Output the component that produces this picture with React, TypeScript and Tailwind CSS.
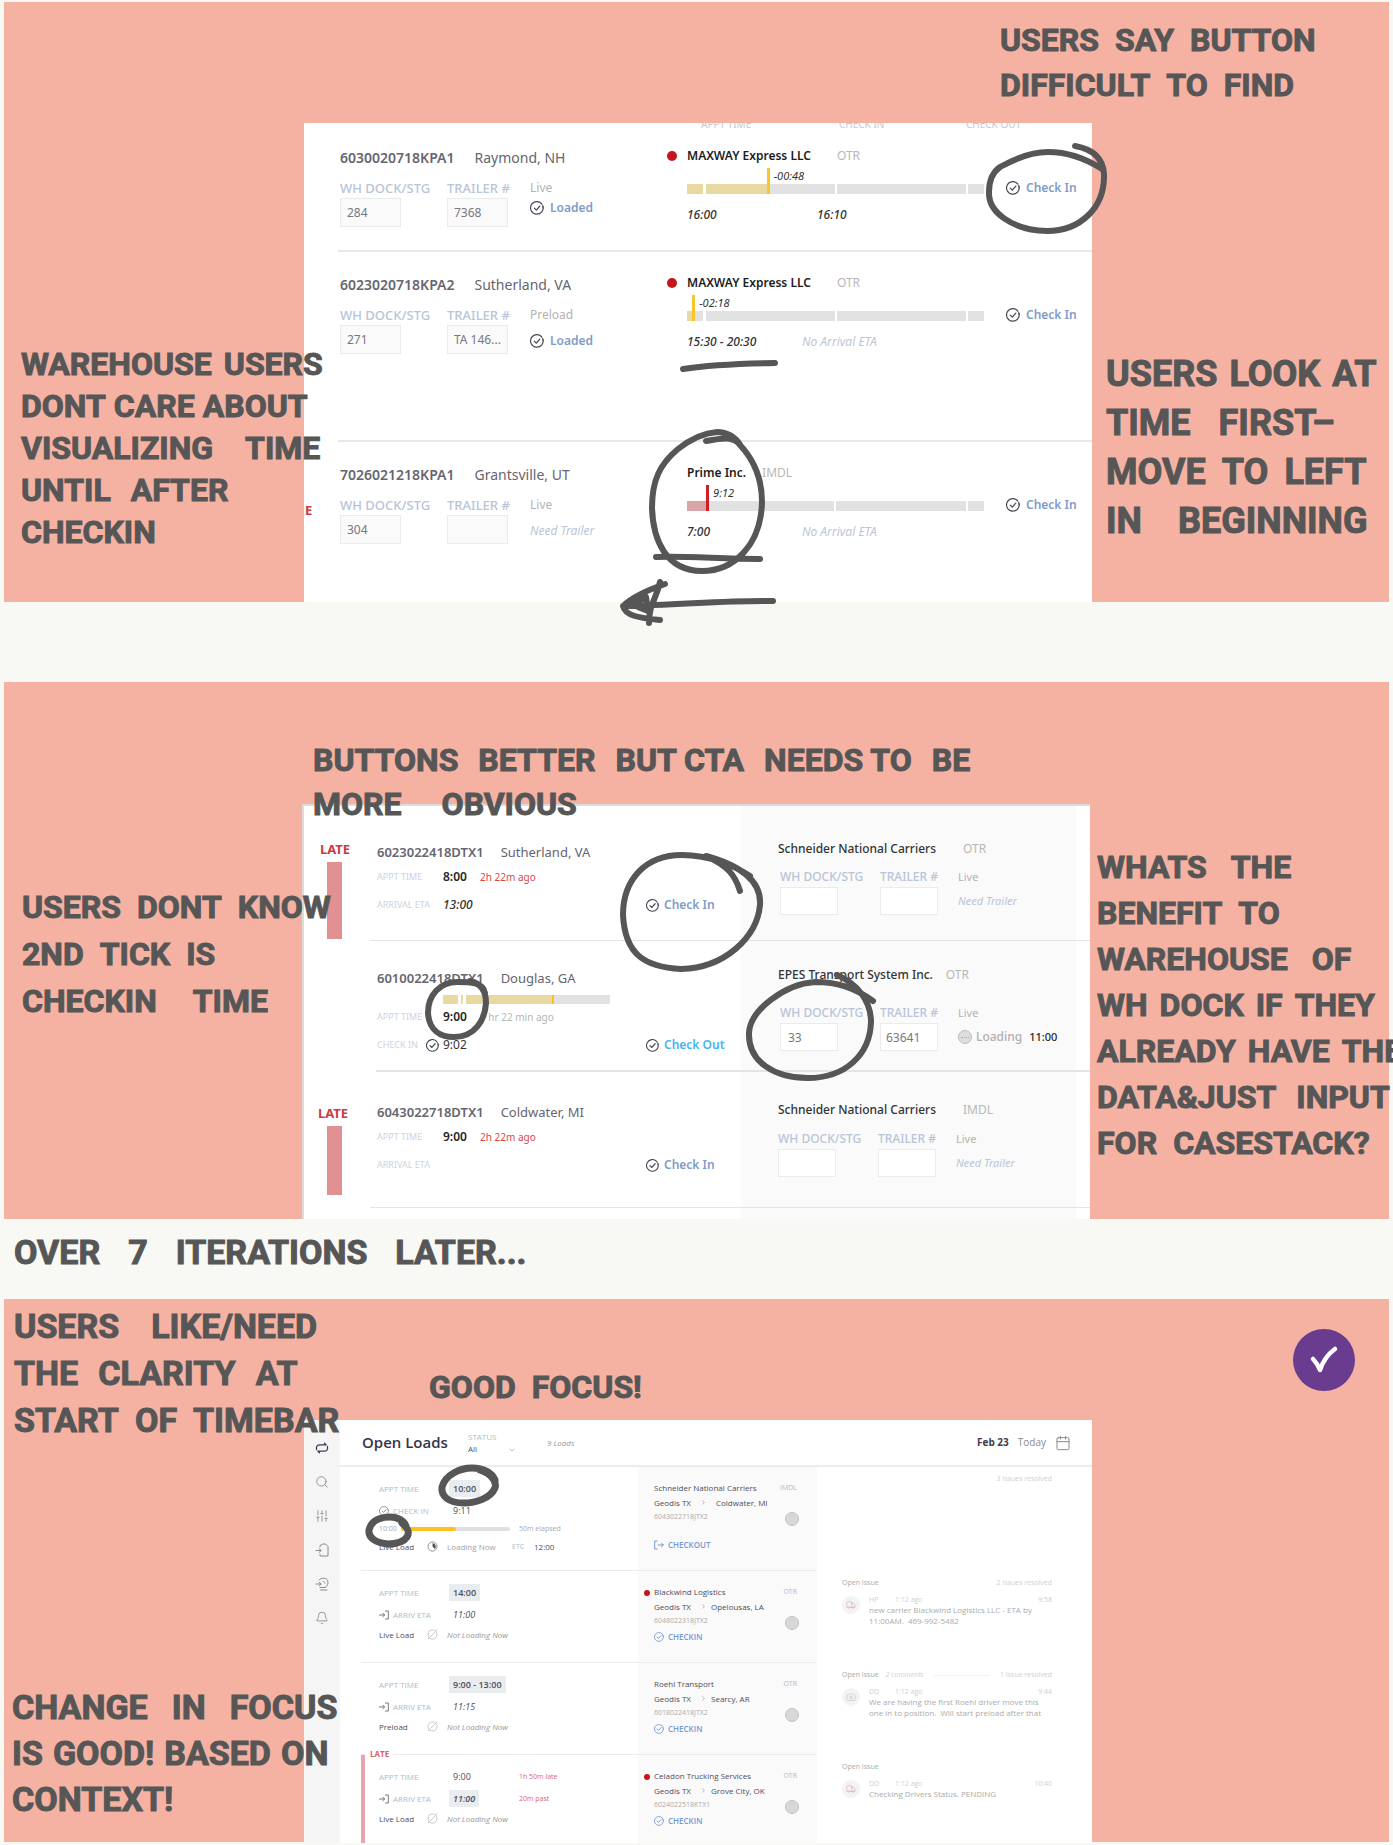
import React from "react";
import { Bell, Calendar, Camera, ChevronDown, ChevronRight, Search, SlidersVertical, Truck } from "lucide-react";

const INK = "#565656";

/* ---------- handwritten layer ---------- */

type Line = { gap: string; words: string[] };

function Note({ className, lines }: { className: string; lines: Line[] }) {
  return (
    <div className={"absolute z-20 whitespace-nowrap font-['Roboto',sans-serif] font-bold text-[#565656] [-webkit-text-stroke:1px_#565656] [stroke-linejoin:round] " + className}>
      {lines.map((line, i) => (
        <p key={i} className={"flex " + line.gap}>
          {line.words.map((w, j) => (
            <span key={j}>{w}</span>
          ))}
        </p>
      ))}
    </div>
  );
}

function Ink({ x, y, paths, width = 6 }: { x: number; y: number; paths: string[]; width?: number }) {
  return (
    <svg className="pointer-events-none absolute left-0 top-0 z-10 overflow-visible" width="788" height="400" fill="none" stroke={INK} strokeWidth={width} strokeLinecap="round" strokeLinejoin="round" aria-hidden="true">
      <g transform={`translate(${-x} ${-y})`}>
        {paths.map((d) => (
          <path key={d} d={d} />
        ))}
      </g>
    </svg>
  );
}

/* ---------- shared pieces ---------- */

function CheckCircle({ className }: { className: string }) {
  return (
    <svg className={"shrink-0 " + className} viewBox="0 0 14 14" fill="none" stroke="currentColor" strokeLinecap="round" strokeLinejoin="round" aria-hidden="true">
      <path d="M11.6 2.7A6.3 6.3 0 1 0 12.9 5" strokeWidth="1.2" />
      <path d="M11.2 2.4A6.3 6.3 0 0 1 13.2 7" strokeWidth="0.9" />
      <path d="M4.3 7.1l2 2 3.5-4" strokeWidth="1.3" />
    </svg>
  );
}

function Field({ id, label, value, className, boxClass }: { id: string; label: string; value: string; className: string; boxClass: string }) {
  return (
    <div className={className}>
      <label htmlFor={id} className="block whitespace-nowrap font-medium leading-4 text-[#b9c4d8]">
        {label}
      </label>
      <input id={id} defaultValue={value} className={"mt-[2px] block border border-[#ebebeb] text-[#77777f] outline-none " + boxClass} />
    </div>
  );
}

/* ---------- first board ---------- */

type Load = {
  id: string;
  city: string;
  dock: string;
  trailer: string;
  mode: string;
  loaded: boolean;
  carrier: string;
  kind: string;
  alert: boolean;
  late?: boolean;
  at: number;
  delta: string;
  appt: string;
  eta?: string;
  rowClass: string;
  statusClass: string;
};

const LOADS: Load[] = [
  { id: "6030020718KPA1", city: "Raymond, NH", dock: "284", trailer: "7368", mode: "Live", loaded: true, carrier: "MAXWAY Express LLC", kind: "OTR", alert: true, at: 27.5, delta: "-00:48", appt: "16:00", eta: "16:10", rowClass: "-mt-1 h-[127px] border-b-2", statusClass: "mt-[2px]" },
  { id: "6023020718KPA2", city: "Sutherland, VA", dock: "271", trailer: "TA 146...", mode: "Preload", loaded: true, carrier: "MAXWAY Express LLC", kind: "OTR", alert: true, at: 2.4, delta: "-02:18", appt: "15:30 - 20:30", rowClass: "h-[190px] border-b-2", statusClass: "mt-2" },
  { id: "7026021218KPA1", city: "Grantsville, UT", dock: "304", trailer: "", mode: "Live", loaded: false, carrier: "Prime Inc.", kind: "IMDL", alert: false, late: true, at: 7.1, delta: "9:12", appt: "7:00", rowClass: "h-[160px]", statusClass: "mt-2" },
];

function TimeBar({ load }: { load: Load }) {
  return (
    <div className="relative mt-[18px] h-[10px] bg-[#e2e2e2]">
      <div className={"absolute inset-y-0 left-0 " + (load.late ? "bg-[#d9a6a8]" : "bg-[#e8d9a3]")} style={{ width: `${load.at}%` }} />
      <div className="absolute inset-0 flex">
        <span className="w-4" />
        {!load.late && <span className="w-[3px] bg-white" />}
        <span className="flex-1" />
        <span className="w-[2px] bg-white" />
        <span className="flex-1" />
        <span className="w-[2px] bg-white" />
        <span className="w-4" />
      </div>
      <div className={"absolute -top-4 h-[26px] w-[3px] " + (load.late ? "bg-[#cc1f26]" : "bg-[#f8c62a]")} style={{ left: `calc(${load.at}% - 2px)` }} />
      <span className="absolute -top-4 text-[11px] italic leading-4 text-[#333]" style={{ left: `calc(${load.at}% + 5px)` }}>
        {load.delta}
      </span>
    </div>
  );
}

function LoadRow({ load }: { load: Load }) {
  return (
    <li className={"relative ml-[34px] grid grid-cols-[327px_minmax(0,1fr)_86px] border-[#e8e8e8] pl-[2px] " + load.rowClass}>
      {load.late && <span className="absolute -left-[33px] top-[60px] text-[13px] font-bold leading-4 text-[#cc3a40]">E</span>}
      <div className="pt-[23px]">
        <p className="flex gap-5 text-[14px] leading-5 text-[#666570]">
          <span className="font-semibold">{load.id}</span>
          <span>{load.city}</span>
        </p>
        <div className="mt-3 flex text-[13px]">
          <Field id={load.id + "-dock"} label="WH DOCK/STG" value={load.dock} className="w-[107px]" boxClass="h-[29px] w-[61px] bg-[#fafafa] px-[6px] text-[12px]" />
          <Field id={load.id + "-trailer"} label="TRAILER #" value={load.trailer} className="w-[83px]" boxClass="h-[29px] w-[61px] bg-[#fafafa] px-[6px] text-[12px]" />
          <div className="text-[12px]">
            <p className="leading-4 text-[#b3b3b3]">{load.mode}</p>
            <p className={"flex items-center gap-[6px] leading-5 " + load.statusClass}>
              {load.loaded ? (
                <>
                  <CheckCircle className="size-[14px] text-[#4b4a58]" />
                  <span className="font-semibold text-[#7f9cc9]">Loaded</span>
                </>
              ) : (
                <span className="italic text-[#b9c4d8]">Need Trailer</span>
              )}
            </p>
          </div>
        </div>
      </div>
      <div className="pl-5 pr-[22px] pt-[21px]">
        <p className={"relative flex items-center text-[12px] leading-5 " + (load.late ? "gap-4" : "gap-[26px]")}>
          {load.alert && <span className="absolute -left-5 size-[10px] rounded-full bg-[#c4161c]" />}
          <span className="font-semibold text-[#1c1c1c]">{load.carrier}</span>
          <span className="text-[#b8b8b8]">{load.kind}</span>
        </p>
        <TimeBar load={load} />
        <p className="mt-[11px] flex text-[12px] italic leading-5">
          <span className={"font-medium text-[#333] " + (load.eta ? "w-[130px]" : "w-[115px]")}>{load.appt}</span>
          {load.eta ? <span className="font-medium text-[#333]">{load.eta}</span> : <span className="text-[#bcc5d8]">No Arrival ETA</span>}
        </p>
      </div>
      <button type="button" className="mt-[53px] flex h-5 items-center gap-[6px] whitespace-nowrap text-[12px] font-semibold text-[#7f9cc9]">
        <CheckCircle className="size-[14px] text-[#4b4a58]" />
        Check In
      </button>
    </li>
  );
}

function FirstBoard() {
  return (
    <section className="relative grid h-[600px] grid-cols-[300px_minmax(0,1fr)_297px] bg-[#f5b2a3]">
      <Note
        className="right-[76px] top-4 w-[313px] text-[32px] leading-[45px]"
        lines={[
          { gap: "gap-4", words: ["USERS", "SAY", "BUTTON"] },
          { gap: "gap-4", words: ["DIFFICULT", "TO", "FIND"] },
        ]}
      />
      <Note
        className="left-[17px] top-[341px] text-[32px] leading-[42px]"
        lines={[
          { gap: "gap-3", words: ["WAREHOUSE", "USERS"] },
          { gap: "gap-2", words: ["DONT", "CARE", "ABOUT"] },
          { gap: "gap-8", words: ["VISUALIZING", "TIME"] },
          { gap: "gap-5", words: ["UNTIL", "AFTER"] },
          { gap: "gap-4", words: ["CHECKIN"] },
        ]}
      />
      <Note
        className="right-[14px] top-[348px] w-[269px] text-[36px] leading-[49px]"
        lines={[
          { gap: "gap-3", words: ["USERS", "LOOK", "AT"] },
          { gap: "gap-7", words: ["TIME", "FIRST–"] },
          { gap: "gap-4", words: ["MOVE", "TO", "LEFT"] },
          { gap: "gap-9", words: ["IN", "BEGINNING"] },
        ]}
      />
      <div className="relative col-start-2 mt-[121px] bg-white font-['Noto_Sans',sans-serif]">
        <div className="ml-[397px] flex h-[6px] items-end overflow-hidden text-[10px] leading-[9px] text-[#c3c8d6]">
          <span className="w-[138px]">APPT TIME</span>
          <span className="w-[127px]">CHECK IN</span>
          <span>CHECK OUT</span>
        </div>
        <ul>
          {LOADS.map((l) => (
            <LoadRow key={l.id} load={l} />
          ))}
        </ul>
        <Ink
          x={304}
          y={123}
          paths={[
            "M1075 146C1092 149 1103 158 1104 174C1105 208 1080 231 1047 231C1012 230 988 212 989 192C989 180 993 172 1000 167C1018 157 1034 152 1048 152C1070 152 1088 160 1102 169",
            "M683 369Q715 364 775 363",
            "M706 441C722 438 734 436 740 445C754 460 762 480 762 502C761 545 734 571 702 571C666 571 653 540 652 508C652 480 660 464 678 449C692 438 704 433 717 432C728 432 736 438 741 446",
            "M656 557C690 556 720 559 760 559",
            "M773 601C733 600 690 604 623 606C632 597 645 591 665 584M623 606C625 616 640 618 660 620M660 582C656 600 649 604 649 623M634 604L646 597L648 611L638 607",
          ]}
        />
      </div>
    </section>
  );
}

/* ---------- second board ---------- */

type Stop = {
  id: string;
  city: string;
  late?: boolean;
  appt: string;
  ago: string;
  etaLabel: string;
  eta: string;
  action: string;
  carrier: string;
  kind: string;
  dock: string;
  trailer: string;
  loadingAt?: string;
  progress?: boolean;
  rowClass: string;
  bodyClass: string;
  padLeft: string;
  padRight: string;
  fieldsClass: string;
  lateClass: string;
  lateBar: string;
  kindGap: string;
};

const STOPS: Stop[] = [
  { id: "6023022418DTX1", city: "Sutherland, VA", late: true, appt: "8:00", ago: "2h 22m ago", etaLabel: "ARRIVAL ETA", eta: "13:00", action: "Check In", carrier: "Schneider National Carriers", kind: "OTR", dock: "", trailer: "", rowClass: "h-[135px]", bodyClass: "border-b pl-[7px]", padLeft: "pt-[36px]", padRight: "pt-[33px]", fieldsClass: "mt-[10px] ml-[2px]", lateClass: "pt-[35px] pl-4", lateBar: "ml-[7px] h-[77px]", kindGap: "gap-[27px]" },
  { id: "6010022418DTX1", city: "Douglas, GA", appt: "9:00", ago: "1 hr 22 min ago", etaLabel: "CHECK IN", eta: "9:02", action: "Check Out", carrier: "EPES Transport System Inc.", kind: "OTR", dock: "33", trailer: "63641", loadingAt: "11:00", progress: true, rowClass: "h-[131px]", bodyClass: "border-b-2 ml-[6px] pl-px", padLeft: "pt-[27px]", padRight: "pt-6", fieldsClass: "mt-5 ml-[2px]", lateClass: "", lateBar: "", kindGap: "gap-[13px]" },
  { id: "6043022718DTX1", city: "Coldwater, MI", late: true, appt: "9:00", ago: "2h 22m ago", etaLabel: "ARRIVAL ETA", eta: "", action: "Check In", carrier: "Schneider National Carriers", kind: "IMDL", dock: "", trailer: "", rowClass: "h-[136px]", bodyClass: "border-b pl-[7px]", padLeft: "pt-[30px]", padRight: "pt-7", fieldsClass: "mt-[11px]", lateClass: "pt-[33px] pl-[14px]", lateBar: "ml-[9px] h-[69px]", kindGap: "gap-[27px]" },
];

function StopRow({ stop }: { stop: Stop }) {
  const live = stop.action === "Check Out";
  return (
    <li className={"flex " + stop.rowClass}>
      <div className={"w-[66px] shrink-0 " + stop.lateClass}>
        {stop.late && (
          <>
            <p className="text-[13px] font-bold leading-4 text-[#cc3a40]">LATE</p>
            <div className={"mt-[5px] w-[15px] bg-[#e29092] " + stop.lateBar} />
          </>
        )}
      </div>
      <div className={"flex min-w-0 flex-1 border-[#e4e4e4] " + stop.bodyClass}>
        <div className={"relative flex-1 text-[12px] " + stop.padLeft}>
          <p className="flex gap-[17px] text-[13px] leading-5 text-[#666570]">
            <span className="font-semibold">{stop.id}</span>
            <span>{stop.city}</span>
          </p>
          {stop.progress && (
            <div className="ml-[66px] mt-[7px] flex h-[9px] w-[167px] gap-[3px]">
              <span className="w-[15px] bg-[#e8d9a3]" />
              <span className="w-[2px] bg-[#e8d9a3]" />
              <span className="flex flex-1 bg-[#e2e2e2]">
                <span className="w-[61%] border-r-2 border-[#fbc216] bg-[#e8d9a3]" />
              </span>
            </div>
          )}
          <dl className={stop.progress ? "mt-[3px]" : "mt-[5px]"}>
            <div className="flex items-center leading-5">
              <dt className="w-[66px] text-[9px] text-[#cdd2de]">APPT TIME</dt>
              <dd className="w-[37px] font-semibold text-[#262626]">{stop.appt}</dd>
              <dd className={"text-[10px] " + (stop.late ? "text-[#d5484d]" : "text-[#b5b5b5]")}>{stop.ago}</dd>
            </div>
            <div className="mt-2 flex h-5 items-center leading-5">
              <dt className="flex w-[66px] items-center text-[9px] text-[#cdd2de]">
                <span className="flex-1">{stop.etaLabel}</span>
                {stop.progress && <CheckCircle className="mr-1 size-[13px] text-[#4b4a58]" />}
              </dt>
              <dd className={"text-[#333] " + (stop.progress ? "" : "font-medium italic")}>{stop.eta}</dd>
              <dd className="ml-auto w-[95px]">
                <button type="button" className={"flex items-center gap-[5px] whitespace-nowrap font-semibold " + (live ? "text-[#45b5f0]" : "text-[#7f9cc9]")}>
                  <CheckCircle className="size-[13px] text-[#4b4a58]" />
                  {stop.action}
                </button>
              </dd>
            </div>
          </dl>
        </div>
        <div className={"w-[335px] shrink-0 bg-[#fafafa] pl-[37px] text-[12px] " + stop.padRight}>
          <p className={"flex leading-5 " + stop.kindGap}>
            <span className="font-medium text-[#333]">{stop.carrier}</span>
            <span className="text-[#b8b8b8]">{stop.kind}</span>
          </p>
          <div className={"flex text-[12px] " + stop.fieldsClass}>
            <Field id={stop.id + "-dock"} label="WH DOCK/STG" value={stop.dock} className="w-[100px]" boxClass="h-[28px] w-[58px] bg-white px-[7px] text-[12px]" />
            <Field id={stop.id + "-trailer"} label="TRAILER #" value={stop.trailer} className="w-[78px]" boxClass="h-[28px] w-[58px] bg-white px-[5px] text-[12px]" />
            <div className="text-[11px]">
              <p className="leading-4 text-[#b3b3b3]">Live</p>
              <p className="mt-[6px] flex items-center leading-5">
                {stop.loadingAt ? (
                  <>
                    <span className="flex size-[14px] items-center rounded-full border border-[#bdbdbd] bg-[#dedede] px-[2px]">
                      <span className="w-full border-t border-dotted border-[#aaa]" />
                    </span>
                    <span className="ml-1 text-[12px] font-medium text-[#b0b0b0]">Loading</span>
                    <span className="ml-[7px] font-medium text-[#262626]">{stop.loadingAt}</span>
                  </>
                ) : (
                  <span className="italic text-[#b9c4d8]">Need Trailer</span>
                )}
              </p>
            </div>
          </div>
        </div>
        <div className="w-[14px] shrink-0" />
      </div>
    </li>
  );
}

function SecondBoard() {
  return (
    <section className="relative grid h-[537px] grid-cols-[298px_minmax(0,1fr)_299px] bg-[#f5b2a3]">
      <Note
        className="left-[18px] top-[202px] text-[32px] leading-[47px]"
        lines={[
          { gap: "gap-4", words: ["USERS", "DONT", "KNOW"] },
          { gap: "gap-4", words: ["2ND", "TICK", "IS"] },
          { gap: "gap-9", words: ["CHECKIN", "TIME"] },
        ]}
      />
      <Note
        className="right-0 top-[162px] w-[292px] text-[32px] leading-[46px]"
        lines={[
          { gap: "gap-6", words: ["WHATS", "THE"] },
          { gap: "gap-4", words: ["BENEFIT", "TO"] },
          { gap: "gap-6", words: ["WAREHOUSE", "OF"] },
          { gap: "gap-3", words: ["WH", "DOCK", "IF", "THEY"] },
          { gap: "gap-3", words: ["ALREADY", "HAVE", "THE"] },
          { gap: "gap-5", words: ["DATA&JUST", "INPUT"] },
          { gap: "gap-4", words: ["FOR", "CASESTACK?"] },
        ]}
      />
      <div className="relative col-start-2 mt-[122px] flex flex-col border-l-2 border-t-2 border-[#dcdcdc] bg-white font-['Noto_Sans',sans-serif]">
        <Note
          className="left-[9px] -top-[68px] text-[32px] leading-[44px]"
          lines={[
            { gap: "gap-5", words: ["BUTTONS", "BETTER", "BUT CTA", "NEEDS TO", "BE"] },
            { gap: "gap-10", words: ["MORE", "OBVIOUS"] },
          ]}
        />
        <ul>
          {STOPS.map((s) => (
            <StopRow key={s.id} stop={s} />
          ))}
        </ul>
        <div className="mr-[14px] w-[335px] flex-1 self-end bg-[#fafafa]" />
        <Ink
          x={304}
          y={806}
          paths={[
            "M740 891C735 875 728 866 706 856C735 864 762 878 760 905C757 937 725 968 681 969C645 967 625 955 623 915C623 880 645 855 682 855C710 855 735 866 750 876",
            "M485 993C483 982 470 982 457 982C440 982 428 995 428 1013C429 1030 440 1037 454 1037C475 1037 485 1020 486 1003C486 990 480 983 470 981",
            "M873 1001C855 988 838 982 815 982C785 984 750 1010 749 1033C748 1062 775 1078 808 1078C845 1078 870 1055 871 1022C871 1000 856 983 837 975",
          ]}
        />
      </div>
    </section>
  );
}

/* ---------- third board ---------- */

type Entry = {
  id: string;
  carrier: string;
  kind: string;
  to: string;
  alert?: boolean;
  appt: string;
  apptNote?: string;
  chip: "appt" | "eta";
  eta: string;
  etaNote?: string;
  mode: string;
  active?: boolean;
  late?: boolean;
  resolved?: string;
  comments?: string;
  issue?: { who: string; at: string; text: string; truck: boolean };
  height: string;
};

const ENTRIES: Entry[] = [
  { id: "6043022718JTX2", carrier: "Schneider National Carriers", kind: "IMDL", to: "Coldwater, MI", appt: "10:00", chip: "appt", eta: "9:11", mode: "Live Load", active: true, resolved: "3 issues resolved", height: "h-[104px]" },
  { id: "6048022318JTX2", carrier: "Blackwind Logistics", kind: "OTR", to: "Opelousas, LA", alert: true, appt: "14:00", chip: "appt", eta: "11:00", mode: "Live Load", resolved: "2 issues resolved", issue: { who: "HP", at: "9:58", text: "new carrier Blackwind Logistics LLC - ETA by 11:00AM.  469-992-5482", truck: true }, height: "h-[92px]" },
  { id: "6018022418JTX2", carrier: "Roehl Transport", kind: "OTR", to: "Searcy, AR", appt: "9:00 - 13:00", chip: "appt", eta: "11:15", mode: "Preload", resolved: "1 issue resolved", comments: "2 comments", issue: { who: "DD", at: "9:44", text: "We are having the first Roehl driver move this one in to position.  Will start preload after that", truck: false }, height: "h-[92px]" },
  { id: "6024022518KTX1", carrier: "Celadon Trucking Services", kind: "OTR", to: "Grove City, OK", alert: true, appt: "9:00", apptNote: "1h 50m late", chip: "eta", eta: "11:00", etaNote: "20m past", mode: "Live Load", late: true, issue: { who: "DD", at: "10:40", text: "Checking Drivers Status. PENDING", truck: true }, height: "h-[88px]" },
];

function ArriveIcon({ className }: { className: string }) {
  return (
    <svg className={className} viewBox="0 0 10 10" fill="none" stroke="currentColor" strokeWidth="1" strokeLinecap="round" strokeLinejoin="round" aria-hidden="true">
      <path d="M.5 5h5M3.8 3.2L5.6 5 3.8 6.8M6.5 1h2.8v8H6.5" />
    </svg>
  );
}

function LeaveIcon({ className }: { className: string }) {
  return (
    <svg className={className} viewBox="0 0 10 10" fill="none" stroke="currentColor" strokeWidth="1" strokeLinecap="round" strokeLinejoin="round" aria-hidden="true">
      <path d="M3.2 1H.7v8h2.5M4 5h5.3M7.5 3.2L9.3 5 7.5 6.8" />
    </svg>
  );
}

function LoadingIcon({ active }: { active?: boolean }) {
  return (
    <svg className="size-[11px]" viewBox="0 0 12 12" fill="none" aria-hidden="true">
      <circle cx="6" cy="6" r="5" stroke={active ? "#8a8a90" : "#c4c4c4"} strokeWidth="1" />
      {active ? <path d="M6 2.4A3.6 3.6 0 0 1 8.6 8.6L6 6Z" fill="#55545f" /> : <path d="M1 11L11 1" stroke="#c4c4c4" />}
    </svg>
  );
}

function Chip({ on, children }: { on: boolean; children: React.ReactNode }) {
  return <span className={"-ml-1 inline-block px-1 leading-[17px] " + (on ? "bg-[#e9edf0] font-semibold" : "")}>{children}</span>;
}

function EntryRow({ entry }: { entry: Entry }) {
  return (
    <li className={"flex " + entry.height}>
      <div className={"relative ml-[21px] min-w-0 flex-1 border-[#ececec] pl-[18px] pt-[13px] text-[#4d4c5e] " + (entry.late ? "" : "border-b")}>
        {entry.late && (
          <>
            <span className="absolute inset-y-0 left-0 w-1 bg-[#e9a3aa]" />
            <span className="absolute -top-[7px] left-[5px] bg-white px-1 text-[8px] font-bold leading-3 text-[#d8606c]">LATE</span>
          </>
        )}
        <div className="flex items-center text-[9px] leading-[17px]">
          <span className="w-[74px] text-[8px] text-[#a9bccb]">APPT TIME</span>
          <span className="w-[66px] whitespace-nowrap">
            <Chip on={entry.chip === "appt"}>{entry.appt}</Chip>
          </span>
          <span className="text-[7px] text-[#dd6672]">{entry.apptNote}</span>
        </div>
        <div className="mt-[5px] flex items-center text-[9px] leading-[17px]">
          <span className="flex w-[74px] items-center gap-[4px] text-[8px] text-[#a9bccb]">
            {entry.active ? <CheckCircle className="size-[10px] text-[#8a8a90]" /> : <ArriveIcon className="size-[10px] text-[#77777f]" />}
            {entry.active ? "CHECK IN" : "ARRIV ETA"}
          </span>
          <span className={"w-[66px] " + (entry.active ? "" : "italic")}>
            <Chip on={entry.chip === "eta"}>{entry.eta}</Chip>
          </span>
          <span className="text-[7px] text-[#dd6672]">{entry.etaNote}</span>
        </div>
        {entry.active && (
          <div className="mt-[5px] flex items-center text-[7px] leading-[10px] text-[#aaa]">
            <span className="w-[22px]">10:00</span>
            <span className="mr-[9px] flex h-1 w-[109px] rounded-full bg-[#e0e0e0]">
              <span className="w-1/2 rounded-full bg-[#fcc11d]" />
            </span>
            <span>50m elapsed</span>
          </div>
        )}
        <div className={"flex items-center whitespace-nowrap text-[8px] leading-[17px] " + (entry.active ? "mt-1" : "mt-[3px]")}>
          <span className="w-12">{entry.mode}</span>
          <LoadingIcon active={entry.active} />
          {entry.active ? (
            <>
              <span className="ml-[9px] w-[65px] text-[#a3a3a3]">Loading Now</span>
              <span className="w-[22px] text-[7px] text-[#a9bccb]">ETC</span>
              <span>12:00</span>
            </>
          ) : (
            <span className="ml-[9px] italic text-[#999]">Not Loading Now</span>
          )}
        </div>
      </div>
      <div className={"relative w-[179px] shrink-0 border-[#ececec] bg-[#fafafa] pl-4 pt-[13px] text-[8px] font-medium leading-[15px] text-[#4d4c5e] " + (entry.late ? "" : "border-b")}>
        {entry.alert && <span className="absolute left-[6px] top-[19px] size-[6px] rounded-full bg-[#c4161c]" />}
        <div className="flex justify-between pr-5">
          <span>{entry.carrier}</span>
          <span className="text-[7px] font-normal text-[#b8b8b8]">{entry.kind}</span>
        </div>
        <p className="flex items-center">
          <span className="w-[46px]">Geodis TX</span>
          <ChevronRight className={"size-[7px] text-[#888] " + (entry.active ? "mr-[9px]" : "mr-1")} />
          {entry.to}
        </p>
        <p className="text-[7px] font-normal leading-[14px] text-[#aaa]">{entry.id}</p>
        <button type="button" className={"flex items-center gap-1 font-semibold text-[#7799cc] " + (entry.active ? "mt-[13px]" : "mt-px")}>
          {entry.active ? <LeaveIcon className="size-[10px]" /> : <CheckCircle className="size-[10px]" />}
          {entry.active ? "CHECKOUT" : "CHECKIN"}
        </button>
        <span className="absolute right-[18px] top-[45px] size-[14px] rounded-full border border-[#c2c2c2] bg-[#d8d8d8]" />
      </div>
      <div className="w-[275px] shrink-0 pl-[25px] pr-10 pt-[7px] text-[7px] leading-[10px] text-[#cfcfcf]">
        <div className="flex items-center gap-[7px]">
          {entry.issue && <span className="font-medium text-[#a8a8a8]">Open Issue</span>}
          {entry.comments && (
            <>
              <span className="italic">{entry.comments}</span>
              <span className="ml-1 w-14 border-t border-[#f0f0f0]" />
            </>
          )}
          <span className="ml-auto">{entry.resolved}</span>
        </div>
        {entry.issue && (
          <div className="mt-[7px] flex gap-[9px]">
            <span className="mt-[1px] flex size-[18px] shrink-0 items-center justify-center rounded-full bg-[#f3f3f3]">
              {entry.issue.truck ? <Truck className="size-[10px] text-[#e6b5c8]" /> : <Camera className="size-[10px] text-[#ccc]" />}
            </span>
            <div className="min-w-0 flex-1">
              <p className="flex leading-[9px]">
                <span className="w-[26px]">{entry.issue.who}</span>
                <span>1:12 ago</span>
                <span className="ml-auto">{entry.issue.at}</span>
              </p>
              <p className="whitespace-pre-wrap pr-1 text-[8px] leading-[11px] text-[#ababab]">{entry.issue.text}</p>
            </div>
          </div>
        )}
      </div>
    </li>
  );
}

function Sidebar() {
  const items = [
    {
      label: "Sync",
      icon: (
        <svg className="size-[14px] text-[#3d3c50]" viewBox="0 0 14 14" fill="none" stroke="currentColor" strokeWidth="1.3" strokeLinecap="round" strokeLinejoin="round">
          <path d="M1.500 8.500C.8 4.500 3 3.800 5 3.800H11M9.500 2.300L11.200 3.900M12.500 5.500C13.200 9.500 11 10.200 9 10.200H3M4.500 11.700L2.800 10.100" />
        </svg>
      ),
    },
    { label: "Search", icon: <Search className="size-[14px]" strokeWidth={1.5} /> },
    { label: "Filters", icon: <SlidersVertical className="size-[14px]" strokeWidth={1.5} /> },
    {
      label: "Arrivals",
      icon: (
        <svg className="size-[14px]" viewBox="0 0 14 14" fill="none" stroke="currentColor" strokeLinecap="round" strokeLinejoin="round">
          <path d="M1 7.5h5M4.3 5.7l1.9 1.8-1.9 1.8M5 4V2.5L8 1h2.5L13 3.5V13H5v-1.5" />
        </svg>
      ),
    },
    {
      label: "Drivers",
      icon: (
        <svg className="size-[14px]" viewBox="0 0 14 14" fill="none" stroke="currentColor" strokeLinecap="round" strokeLinejoin="round">
          <path d="M1 7h5M4.300 5.200l1.900 1.800-1.900 1.800M4 3C6 .5 12.8-.2 13 5.500c0 2.500-1.500 4-3 5H5M5.500 13H12M8 4.500c1 0 2 .5 2 1.500" />
        </svg>
      ),
    },
    { label: "Alerts", icon: <Bell className="size-[14px]" strokeWidth={1.5} /> },
  ];
  return (
    <nav className="flex w-9 shrink-0 flex-col items-center gap-[14px] bg-[#f5f5f5] pt-[18px] text-[#8a8a8f]">
      {items.map((i) => (
        <button key={i.label} type="button" aria-label={i.label} className="flex h-5 w-5 items-center justify-center">
          {i.icon}
        </button>
      ))}
    </nav>
  );
}

function ThirdBoard() {
  return (
    <section className="relative grid h-[543px] grid-cols-[300px_minmax(0,1fr)_297px] bg-[#f5b2a3]">
      <Note
        className="left-[10px] top-1 text-[34px] leading-[47px]"
        lines={[
          { gap: "gap-8", words: ["USERS", "LIKE/NEED"] },
          { gap: "gap-5", words: ["THE", "CLARITY", "AT"] },
          { gap: "gap-4", words: ["START", "OF", "TIMEBAR"] },
        ]}
      />
      <Note
        className="left-2 top-[385px] text-[34px] leading-[46px]"
        lines={[
          { gap: "gap-6", words: ["CHANGE", "IN", "FOCUS"] },
          { gap: "gap-[10px]", words: ["IS", "GOOD!", "BASED", "ON"] },
          { gap: "gap-4", words: ["CONTEXT!"] },
        ]}
      />
      <div className="absolute right-[34px] top-[30px] flex size-[62px] items-center justify-center rounded-full bg-[#6a3c8f]">
        <svg className="size-8" viewBox="0 0 32 32" fill="none" stroke="#fff" strokeWidth="4.500" strokeLinecap="round" strokeLinejoin="round" aria-label="Approved">
          <path d="M5 15c3 3 5 6 7 11C15 17 20 10 27 5" />
        </svg>
      </div>
      <div className="relative col-start-2 mt-[121px] flex bg-white font-['Open_Sans',sans-serif]">
        <Note className="left-[125px] -top-14 text-[32px] leading-[47px]" lines={[{ gap: "gap-4", words: ["GOOD", "FOCUS!"] }]} />
        <Sidebar />
        <div className="min-w-0 flex-1">
          <header className="flex h-[47px] items-center border-b-2 border-[#ececec] pl-[22px] pr-[21px]">
            <h2 className="w-[106px] text-[15px] font-semibold text-[#35344a]">Open Loads</h2>
            <div className="w-[79px] text-[8px]">
              <label htmlFor="status" className="block leading-3 text-[#a9c2d2]">
                STATUS
              </label>
              <div className="relative w-12">
                <select id="status" className="block w-full appearance-none bg-transparent text-[8px] leading-3 text-[#4d4c5e] outline-none">
                  <option>All</option>
                </select>
                <ChevronDown className="pointer-events-none absolute right-0 top-[3px] size-2 text-[#7aa0cc]" />
              </div>
            </div>
            <span className="text-[8px] italic text-[#999]">9 Loads</span>
            <span className="ml-auto text-[10px] font-bold text-[#3d3c50]">Feb 23</span>
            <span className="ml-[9px] text-[10px] text-[#8a8a8f]">Today</span>
            <Calendar className="ml-[9px] size-4 text-[#8a8a8f]" strokeWidth={1.5} />
          </header>
          <ul>
            {ENTRIES.map((e) => (
              <EntryRow key={e.id} entry={e} />
            ))}
          </ul>
        </div>
        <Ink
          x={304}
          y={1420}
          width={7}
          paths={[
            "M480 1470C492 1474 497 1482 495 1488C490 1499 475 1503 464 1503C448 1503 441 1496 442 1487C445 1475 460 1468 472 1468C484 1468 492 1473 495 1480",
            "M402 1523C408 1528 410 1532 407 1537C403 1543 396 1544 388 1544C376 1543 368 1538 369 1530C371 1521 380 1517 390 1517C398 1517 404 1521 406 1526",
          ]}
        />
      </div>
    </section>
  );
}

export default function App() {
  return (
    <main className="overflow-hidden bg-[#f8f8f4] px-1 pb-[3px] pt-[2px]">
      <FirstBoard />
      <div className="h-20" />
      <SecondBoard />
      <div className="relative h-20">
        <Note className="left-[10px] top-[10px] text-[34px] leading-[47px]" lines={[{ gap: "gap-7", words: ["OVER", "7", "ITERATIONS", "LATER..."] }]} />
      </div>
      <ThirdBoard />
    </main>
  );
}
